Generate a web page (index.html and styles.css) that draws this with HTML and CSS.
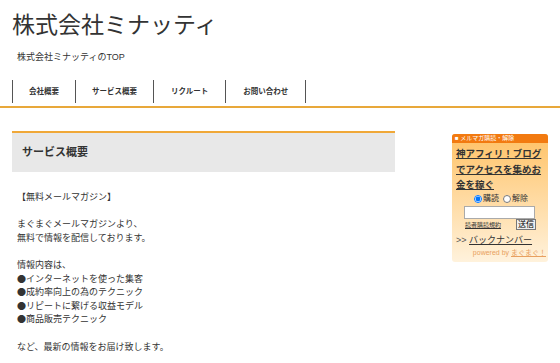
FILE: index.html
```html
<!DOCTYPE html>
<html lang="ja">
<head>
    <meta charset="UTF-8">
    <title>株式会社ミナッティ</title>
    <link rel="stylesheet" href="styles.css">
</head>
<body>
    <header class="site-header">
        <h1 class="site-title">株式会社ミナッティ</h1>
        <p class="site-desc">株式会社ミナッティのTOP</p>
        <nav class="global-nav">
            <a href="#">会社概要</a>
            <a href="#">サービス概要</a>
            <a href="#">リクルート</a>
            <a href="#">お問い合わせ</a>
        </nav>
    </header>

    <div class="wrap">
        <main class="main">
            <h2 class="entry-title">サービス概要</h2>
            <div class="entry-body">
                <p>【無料メールマガジン】</p>
                <p>まぐまぐメールマガジンより、<br>無料で情報を配信しております。</p>
                <p>情報内容は、<br>●インターネットを使った集客<br>●成約率向上の為のテクニック<br>●リピートに繋げる収益モデル<br>●商品販売テクニック</p>
                <p>など、最新の情報をお届け致します。</p>
            </div>
        </main>

        <aside class="side">
            <div class="mag-box">
                <div class="mag-head">■ メルマガ購読・解除</div>
                <div class="mag-body">
                    <a class="mag-title" href="#">神アフィリ！ブログでアクセスを集めお金を稼ぐ</a>
                    <div class="mag-radio">
                        <label><input type="radio" name="mode" checked>購読</label>
                        <label><input type="radio" name="mode">解除</label>
                    </div>
                    <input class="mag-mail" type="text">
                    <div class="mag-submit">
                        <a href="#">読者購読規約</a>
                        <button type="button">送信</button>
                    </div>
                    <div class="mag-back">&gt;&gt; <a href="#">バックナンバー</a></div>
                    <div class="mag-powered">powered by <a href="#">まぐまぐ！</a></div>
                </div>
            </div>
        </aside>
    </div>
</body>
</html>
```

FILE: styles.css
```css
body {
    margin: 0;
    font-family: "Liberation Sans", "Noto Sans CJK JP", sans-serif;
    color: #333;
    background-color: #fff;
}

a {
    color: #333;
}

.site-header {
    border-bottom: 2px solid #e8a83a;
    padding: 9px 0 3px 12px;
}

.site-title {
    margin: 0;
    font-size: 23px;
    font-weight: normal;
    line-height: 32px;
    color: #333;
}

.site-desc {
    margin: 10px 0 0 5px;
    font-size: 9px;
    line-height: 12px;
}

.global-nav {
    display: flex;
    margin-top: 17px;
    border-left: 1px solid #555;
    width: max-content;
}

.global-nav a {
    display: block;
    padding: 0 16px;
    line-height: 23px;
    font-size: 7.5px;
    font-weight: bold;
    text-decoration: none;
    color: #333;
    border-right: 1px solid #555;
}

.global-nav a:nth-child(3),
.global-nav a:nth-child(4) {
    padding: 0 17px;
}

.wrap {
    display: flex;
    justify-content: space-between;
    padding: 23px 12px 0 12px;
}

.main {
    width: 383px;
}

.entry-title {
    margin: 0;
    padding: 0 10px;
    height: 39px;
    line-height: 39px;
    font-size: 11px;
    background-color: #e8e8e8;
    border-top: 2px solid #f0a838;
}

.entry-body {
    padding: 18px 5px 0 5px;
    font-family: "Noto Sans CJK JP", "Liberation Sans", sans-serif;
    font-size: 9px;
    line-height: 13.6px;
}

.entry-body p {
    margin: 0 0 13.6px 0;
}

.side {
    width: 96px;
    margin-top: 3px;
}

.mag-box {
    border-radius: 3px;
    overflow: hidden;
    background: linear-gradient(#ffc266, #fff2dc);
}

.mag-head {
    background-color: #f27a10;
    color: #fff;
    font-size: 6px;
    line-height: 9px;
    padding-left: 3px;
}

.mag-body {
    padding: 3px 2px 5px 4px;
    font-size: 9px;
}

.mag-title {
    display: block;
    font-size: 9.5px;
    font-weight: bold;
    line-height: 15.5px;
}

.mag-radio {
    display: flex;
    justify-content: center;
    gap: 4px;
    margin-top: 1px;
    font-size: 8px;
    line-height: 10px;
}

.mag-radio label {
    display: flex;
    align-items: center;
}

.mag-radio input {
    margin: 0 1px 0 0;
    width: 8px;
    height: 8px;
}

.mag-mail {
    display: block;
    box-sizing: border-box;
    width: 71px;
    height: 13px;
    margin: 2px 0 0 8px;
    border: 1px solid #aaa;
    padding: 0;
}

.mag-submit {
    display: flex;
    align-items: center;
    justify-content: space-between;
    margin: 1px 10px 0 9px;
    font-size: 6px;
    height: 10px;
}

.mag-submit button {
    font-size: 8px;
    padding: 0 1px;
    line-height: 9px;
    border: 1px solid #777;
    background-color: #eee;
    font-family: inherit;
}

.mag-back {
    margin-top: 5px;
    font-size: 9px;
    line-height: 11px;
    color: #555;
}

.mag-powered {
    text-align: right;
    font-size: 7px;
    line-height: 9px;
    color: #e8a060;
    margin-top: 2px;
}

.mag-powered a {
    color: #e8a060;
}
```
